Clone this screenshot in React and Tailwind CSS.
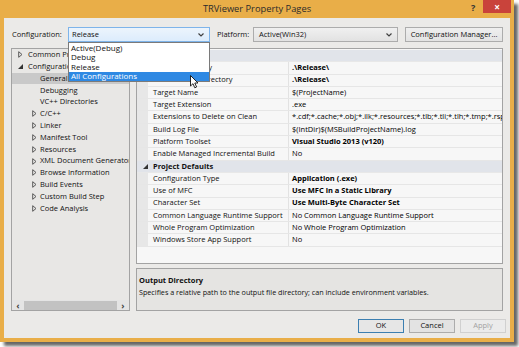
import React from 'react';

const treeItems = [
  { label: 'Common Properties', level: 0, icon: 'closed' },
  { label: 'Configuration Properties', level: 0, icon: 'open' },
  { label: 'General', level: 1, selected: true },
  { label: 'Debugging', level: 1 },
  { label: 'VC++ Directories', level: 1 },
  { label: 'C/C++', level: 1, icon: 'closed' },
  { label: 'Linker', level: 1, icon: 'closed' },
  { label: 'Manifest Tool', level: 1, icon: 'closed' },
  { label: 'Resources', level: 1, icon: 'closed' },
  { label: 'XML Document Generator', level: 1, icon: 'closed' },
  { label: 'Browse Information', level: 1, icon: 'closed' },
  { label: 'Build Events', level: 1, icon: 'closed' },
  { label: 'Custom Build Step', level: 1, icon: 'closed' },
  { label: 'Code Analysis', level: 1, icon: 'closed' },
];

const props = [
  { cat: 'General' },
  { name: 'Output Directory', value: '.\\Release\\', bold: true },
  { name: 'Intermediate Directory', value: '.\\Release\\', bold: true },
  { name: 'Target Name', value: '$(ProjectName)' },
  { name: 'Target Extension', value: '.exe' },
  { name: 'Extensions to Delete on Clean', value: '*.cdf;*.cache;*.obj;*.ilk;*.resources;*.tlb;*.tli;*.tlh;*.tmp;*.rsp;*.pgc;*.pgd;*.meta;$(TargetPath)' },
  { name: 'Build Log File', value: '$(IntDir)$(MSBuildProjectName).log' },
  { name: 'Platform Toolset', value: 'Visual Studio 2013 (v120)', bold: true },
  { name: 'Enable Managed Incremental Build', value: 'No' },
  { cat: 'Project Defaults' },
  { name: 'Configuration Type', value: 'Application (.exe)', bold: true },
  { name: 'Use of MFC', value: 'Use MFC in a Static Library', bold: true },
  { name: 'Character Set', value: 'Use Multi-Byte Character Set', bold: true },
  { name: 'Common Language Runtime Support', value: 'No Common Language Runtime Support' },
  { name: 'Whole Program Optimization', value: 'No Whole Program Optimization' },
  { name: 'Windows Store App Support', value: 'No' },
];

const Chevron = () => (
  <svg width="6" height="4" viewBox="0 0 6 4">
    <path d="M0.5 0.5 L3 3 L5.5 0.5" fill="none" stroke="#404040" strokeWidth="1.2" />
  </svg>
);

const Closed = () => (
  <svg width="5" height="7" viewBox="0 0 5 7">
    <path d="M0.7 0.7 L4 3.5 L0.7 6.3 Z" fill="none" stroke="#5a5a5a" strokeWidth="1" />
  </svg>
);

const Open = () => (
  <svg width="5" height="5" viewBox="0 0 5 5">
    <path d="M5 0 L5 5 L0 5 Z" fill="#333" />
  </svg>
);

export default function App() {
  return (
    <div className="w-[519px] h-[347px] bg-white overflow-hidden font-['Open_Sans','Noto_Sans',sans-serif] text-[7.5px] leading-none text-[#111]">
      <div className="w-[514px] h-[342px] bg-[#e9ae48] flex flex-col shadow-[4px_4px_3px_rgba(0,0,0,0.6)]">
        {/* title bar */}
        <div className="relative h-[18px] flex items-center justify-center">
          <span className="text-[9.3px] text-[#2b2b2b]">TRViewer Property Pages</span>
          <span className="absolute left-[471px] top-[3px] text-[9px] font-bold text-[#333]">?</span>
          <div className="absolute left-[483px] top-0 w-[28px] h-[13px] bg-[#c9433b] flex items-center justify-center">
            <span className="text-white text-[10px] font-bold">×</span>
          </div>
        </div>

        {/* client area */}
        <div className="relative flex-1 mx-[4px] mb-[4px] bg-[#ebeae8] flex flex-col">
          <div className="mt-[9px] h-[15px] flex items-center pl-[8px]">
            <span className="w-[56px]">Configuration:</span>
            <div className="w-[142px] h-[15px] border border-[#7eb4ea] bg-gradient-to-b from-[#ecf4fc] to-[#dcecfc] flex items-center justify-between pl-[3px] pr-[5px]">
              <span>Release</span>
              <Chevron />
            </div>
            <span className="ml-[7px] w-[36px]">Platform:</span>
            <div className="w-[145px] h-[15px] border border-[#acacac] bg-gradient-to-b from-[#f0f0f0] to-[#e2e2e2] flex items-center justify-between pl-[5px] pr-[5px]">
              <span>Active(Win32)</span>
              <Chevron />
            </div>
            <div className="ml-[7px] w-[98px] h-[15px] border border-[#acacac] bg-gradient-to-b from-[#efefef] to-[#e3e3e3] flex items-center justify-center">
              Configuration Manager...
            </div>
          </div>

          <div className="mt-[6px] h-[263px] flex pl-[7px]">
            {/* tree */}
            <div className="w-[119px] border border-[#a3a3a3] bg-[#e8e7e5] flex flex-col">
              <div className="flex-1 overflow-hidden">
                {treeItems.map((t) => (
                  <div
                    key={t.label}
                    className={`h-[11.8px] flex items-center whitespace-nowrap ${t.selected ? 'bg-[#c9c9c9]' : ''}`}
                  >
                    <div className={`${t.level === 0 ? 'w-[16px] pl-[6px]' : 'w-[28px] pl-[20px]'} flex items-center shrink-0`}>
                      {t.icon === 'closed' && <Closed />}
                      {t.icon === 'open' && <Open />}
                    </div>
                    <span>{t.label}</span>
                  </div>
                ))}
              </div>
              <div className="h-[10px] flex items-center bg-[#e4e4e4]">
                <span className="w-[12px] text-center text-[9px] font-bold text-[#444]">‹</span>
                <div className="flex-1 h-[9px] bg-[#c2c2c2]" />
                <span className="w-[12px] text-center text-[9px] font-bold text-[#444]">›</span>
              </div>
            </div>

            {/* right side */}
            <div className="ml-[6px] w-[367px] flex flex-col">
              <div className="h-[216px] border border-[#a3a3a3] bg-[#f7f7f7] pt-[1px] overflow-hidden">
                {props.map((p) =>
                  p.cat ? (
                    <div key={p.cat} className="h-[12.3px] flex items-center bg-[#e1e4ea] border-b border-[#e8e8e8]">
                      <div className="w-[16px] pl-[6px] flex items-center">
                        <Open />
                      </div>
                      <span className="font-bold">{p.cat}</span>
                    </div>
                  ) : (
                    <div key={p.name} className="h-[12.3px] flex border-b border-[#e6e6e6] whitespace-nowrap">
                      <div className="w-[11px] bg-[#e7e7e7] shrink-0" />
                      <div className="w-[141px] shrink-0 pl-[5px] flex items-center border-r border-[#e2e2e2]">
                        {p.name}
                      </div>
                      <div className={`flex-1 pl-[3px] flex items-center overflow-hidden text-black ${p.bold ? 'font-bold' : ''}`}>
                        {p.value}
                      </div>
                    </div>
                  )
                )}
              </div>
              <div className="mt-[4px] h-[43px] border border-[#a3a3a3] bg-[#e5e4e2] pl-[2px] pt-[6px]">
                <div className="h-[12px] flex items-center font-bold">Output Directory</div>
                <div className="h-[12px] flex items-center text-[7.2px]">
                  Specifies a relative path to the output file directory; can include environment variables.
                </div>
              </div>
            </div>
          </div>

          <div className="mt-[8px] h-[14px] flex justify-end gap-[5px] pr-[4px]">
            <div className="w-[46px] h-[14px] border border-[#3c7fb1] bg-[#e6e6e6] flex items-center justify-center">OK</div>
            <div className="w-[46px] h-[14px] border border-[#acacac] bg-[#e3e3e3] flex items-center justify-center">Cancel</div>
            <div className="w-[46px] h-[14px] border border-[#d0d0d0] bg-[#ebebeb] flex items-center justify-center text-[#a2a2a2]">Apply</div>
          </div>

          {/* open dropdown list */}
          <div className="absolute left-[64px] top-[24px] w-[142px] h-[40px] bg-white border border-[#7a7a7a] flex flex-col text-[8px]">
            {['Active(Debug)', 'Debug', 'Release'].map((o) => (
              <div key={o} className="h-[9.6px] flex items-center pl-[2px]">{o}</div>
            ))}
            <div className="flex-1 flex items-center pl-[2px] bg-[#2f89e3] text-white">All Configurations</div>
          </div>

          {/* mouse cursor */}
          <svg className="absolute left-[186px] top-[57px]" width="9" height="14" viewBox="0 0 9 14">
            <path d="M0.5 0.5 L0.5 11 L3 8.7 L4.8 12.8 L6.6 12 L4.8 8 L8 8 Z" fill="#fff" stroke="#111" strokeWidth="0.9" />
          </svg>
        </div>
      </div>
    </div>
  );
}
